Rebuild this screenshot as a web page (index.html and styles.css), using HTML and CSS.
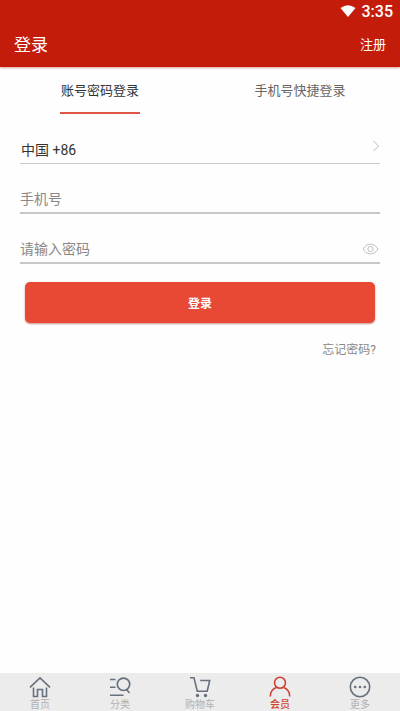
FILE: index.html
```html
<!DOCTYPE html>
<html lang="zh-CN">
<head>
<meta charset="utf-8">
<meta name="viewport" content="width=device-width, initial-scale=1">
<title>登录</title>
<link rel="stylesheet" href="styles.css">
</head>
<body>
<header class="header">
  <div class="status">
    <svg class="wifi" viewBox="0 0 16 12" aria-hidden="true"><path d="M0.500 3Q8-2.500 15.500 3L8 12Z"/></svg>
    <span>3:35</span>
  </div>
  <div class="titlebar">
    <h1 class="title">登录</h1>
    <a class="register" href="#">注册</a>
  </div>
</header>
<main class="main">
  <div class="tabs">
    <button class="tab tab-active" type="button">账号密码登录</button>
    <button class="tab" type="button">手机号快捷登录</button>
  </div>
  <form class="form">
    <button class="country" type="button">
      <span>中国 +86</span>
      <svg class="chevron" viewBox="0 0 8 12" aria-hidden="true"><path d="M1.500 1 6.500 6l-5 5"/></svg>
    </button>
    <div class="field">
      <input class="input" type="tel" placeholder="手机号" aria-label="手机号">
    </div>
    <div class="field">
      <input class="input" type="password" placeholder="请输入密码" aria-label="请输入密码">
      <button class="reveal" type="button" aria-label="显示密码">
        <svg class="eye" viewBox="0 0 18 12" aria-hidden="true"><path d="M1 6Q4 0.700 9 0.700T17 6q-3 5.300-8 5.300T1 6Z"/><circle cx="9" cy="6" r="2.800"/></svg>
      </button>
    </div>
    <button class="submit" type="submit">登录</button>
    <a class="forgot" href="#">忘记密码?</a>
  </form>
</main>
<nav class="nav">
  <a class="item" href="#">
    <svg class="icon" viewBox="0 0 22 22" aria-hidden="true"><path d="M1 11.300 11 1.800l10 9.500M4.500 11.500V20.500h4v-7h5v7h4v-9"/></svg>
    <span>首页</span>
  </a>
  <a class="item" href="#">
    <svg class="icon" viewBox="0 0 22 22" aria-hidden="true"><path d="M1 3.500h5.500M1 11.200h5.500M1 19.300h13.500"/><circle cx="14.500" cy="8.300" r="6.200"/><path d="m17.500 13.500 3 3.500"/></svg>
    <span>分类</span>
  </a>
  <a class="item" href="#">
    <svg class="icon" viewBox="0 0 22 22" aria-hidden="true"><path d="M1 1.700h4l3.300 13.500h9.900L20.700 4.500h-9.500"/><circle class="solid" cx="8.500" cy="19.500" r="1.700"/><circle class="solid" cx="16.500" cy="19.500" r="1.700"/></svg>
    <span>购物车</span>
  </a>
  <a class="item item-active" href="#" aria-current="page">
    <svg class="icon" viewBox="0 0 22 22" aria-hidden="true"><circle cx="11" cy="6.800" r="5.500"/><path d="M1.300 20.500c0-4.700 2.500-7.700 6-9M20.700 20.500c0-4.700-2.500-7.700-6-9"/></svg>
    <span>会员</span>
  </a>
  <a class="item" href="#">
    <svg class="icon" viewBox="0 0 22 22" aria-hidden="true"><circle cx="11" cy="11" r="9.700"/><circle class="solid" cx="6.200" cy="11" r="1.300"/><circle class="solid" cx="11" cy="11" r="1.300"/><circle class="solid" cx="15.800" cy="11" r="1.300"/></svg>
    <span>更多</span>
  </a>
</nav>
</body>
</html>
```
FILE: styles.css
```css
* {
  box-sizing: border-box;
}

body {
  margin: 0;
  min-height: 100vh;
  display: flex;
  flex-direction: column;
  background: #fefefe;
  color: #333;
  font-family: Roboto, "Noto Sans CJK SC", sans-serif;
}

button,
input {
  margin: 0;
  padding: 0;
  border: 0;
  background: none;
  color: inherit;
  font: inherit;
}

a {
  color: inherit;
  text-decoration: none;
}

svg {
  display: block;
  fill: none;
  stroke: currentColor;
}

.header {
  background: #c41c0a;
  color: #fff;
  box-shadow: 0 1px 2px rgba(160, 20, 0, 0.4);
}

.status {
  display: flex;
  justify-content: flex-end;
  align-items: center;
  gap: 6px;
  height: 22px;
  padding-right: 7px;
  font-size: 16px;
  font-weight: 500;
}

.wifi {
  width: 16px;
  height: 12px;
  fill: #fff;
  stroke: none;
}

.titlebar {
  display: flex;
  justify-content: space-between;
  align-items: center;
  height: 45px;
  padding: 0 14px 2px;
}

.title {
  margin: 0;
  font-size: 17px;
  font-weight: 400;
}

.register {
  font-size: 13px;
}

.tabs {
  display: grid;
  grid-template-columns: 1fr 1fr;
  justify-items: center;
}

.tab {
  height: 47px;
  padding: 0 1px;
  border-bottom: 2px solid transparent;
  color: #666;
  font-size: 13px;
}

.tab-active {
  border-color: #e05646;
  color: #333;
}

.form {
  display: flex;
  flex-direction: column;
  padding: 20px 20px 0;
  font-size: 14px;
}

.country {
  display: flex;
  justify-content: space-between;
  align-items: center;
  height: 30px;
  border-bottom: 1px solid #ccc;
  padding: 0 0 0 1px;
}

.chevron {
  width: 8px;
  height: 12px;
  margin-bottom: 5px;
  color: #bbb;
}

.field {
  display: flex;
  align-items: center;
  height: 29px;
  margin-top: 21px;
  border-bottom: 2px solid #c8c8c8;
}

.input {
  flex: 1;
  min-width: 0;
  height: 100%;
  outline: 0;
}

.input::placeholder {
  color: #888;
  opacity: 1;
}

.reveal {
  padding-right: 1px;
}

.eye {
  width: 17px;
  height: 12px;
  color: #bbb;
}

.submit {
  height: 41px;
  margin: 18px 5px 0;
  border-radius: 5px;
  background: #e74935;
  box-shadow: 0 1px 2px rgba(150, 40, 20, 0.5);
  color: #fff;
  font-size: 12px;
  font-weight: 700;
}

.forgot {
  align-self: flex-end;
  margin: 17px 4px 0 0;
  color: #888;
  font-size: 12px;
}

.nav {
  display: flex;
  height: 38px;
  margin-top: auto;
  padding-top: 3px;
  background: #ececec;
}

.item {
  flex: 1;
  display: flex;
  flex-direction: column;
  align-items: center;
  color: #b0b0b0;
  font-size: 10px;
  line-height: 13px;
}

.icon {
  width: 22px;
  height: 22px;
  color: #66717d;
  stroke-width: 1.6;
}

.solid {
  fill: currentColor;
  stroke: none;
}

.item-active,
.item-active .icon {
  color: #cf402f;
}

.item-active {
  font-weight: 500;
}
```
